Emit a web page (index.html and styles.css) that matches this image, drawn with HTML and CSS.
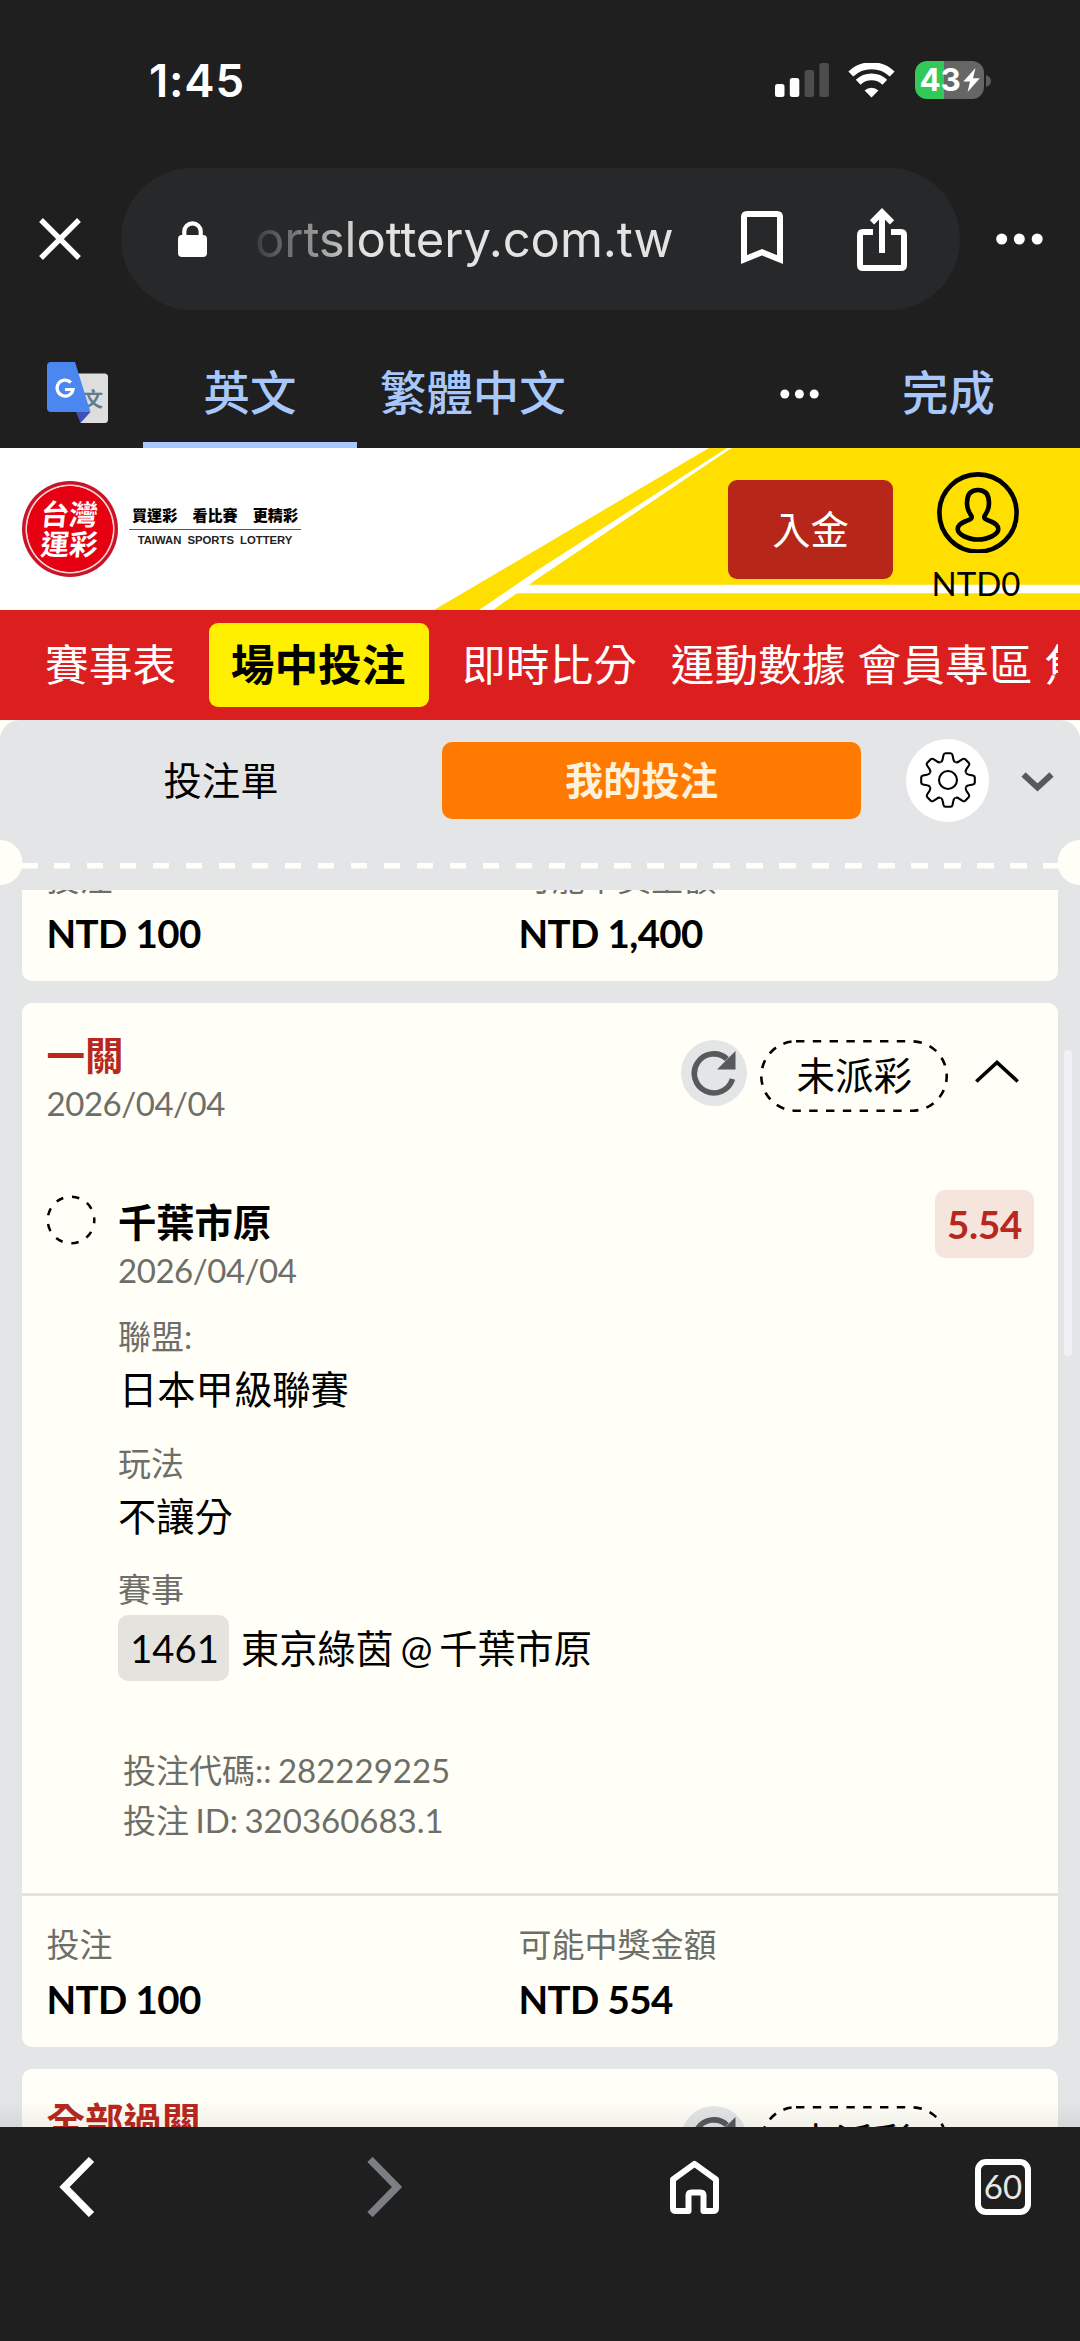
FILE: index.html
```html
<!DOCTYPE html>
<html lang="zh-Hant">
<head>
<meta charset="utf-8">
<title>台灣運彩</title>
<link rel="stylesheet" href="styles.css">
</head>
<body>
<div class="phone">
  <header class="browser">
    <div class="status">
      <span class="clock">1:45</span>
      <svg class="signal" width="54" height="34" viewBox="0 0 54 34">
        <rect x="0" y="21" width="9.5" height="13" rx="2.5" fill="#fff"/>
        <rect x="14.8" y="15" width="9.5" height="19" rx="2.5" fill="#fff"/>
        <rect x="29.6" y="7" width="9.5" height="27" rx="2.5" fill="#4d4d4d"/>
        <rect x="44.4" y="0" width="9.5" height="34" rx="2.5" fill="#4d4d4d"/>
      </svg>
      <svg class="wifi" width="47" height="35" viewBox="0 0 47 35">
        <path d="M2.800 11 A30 30 0 0 1 44.200 11" fill="none" stroke="#fff" stroke-width="7"/>
        <path d="M10.200 19.300 A19 19 0 0 1 36.800 19.300" fill="none" stroke="#fff" stroke-width="6.800"/>
        <path d="M23.5 34.500 L16.600 27.400 A10 10 0 0 1 30.400 27.400 Z" fill="#fff"/>
      </svg>
      <div class="battery">
        <span class="level">43</span>
        <svg width="17" height="24" viewBox="0 0 17 24"><path d="M12.5 0 L0.3 13.4 H7 L4.6 24 L16.8 10.2 H10 Z" fill="#fff"/></svg>
      </div>
      <svg class="nub" width="5" height="12" viewBox="0 0 5 12"><path d="M0 0 Q5 2 5 6 T0 12 Z" fill="#5c5c5c"/></svg>
    </div>
    <div class="address">
      <svg class="close" width="42" height="42" viewBox="0 0 42 42"><path d="M2 2 L40 40 M40 2 L2 40" stroke="#fff" stroke-width="5.4"/></svg>
      <div class="urlbar">
        <svg class="lock" width="29" height="36" viewBox="0 0 29 36">
          <rect x="0" y="14" width="29" height="22" rx="4" fill="#fff"/>
          <path d="M6.3 16 V10.5 A8.2 8.2 0 0 1 22.7 10.5 V16" fill="none" stroke="#fff" stroke-width="4.2"/>
        </svg>
        <span class="url">ortslottery.com.tw</span>
        <svg class="bookmark" width="42" height="54" viewBox="0 0 42 54"><path d="M3 48.6 V6 Q3 3 6 3 H36 Q39 3 39 6 V48.6 L21 41.3 Z" fill="none" stroke="#fff" stroke-width="6"/></svg>
        <svg class="share" width="50" height="64" viewBox="0 0 50 64">
          <path d="M16 24 H6 Q3 24 3 27 V57 Q3 60 6 60 H44 Q47 60 47 57 V27 Q47 24 44 24 H34" fill="none" stroke="#fff" stroke-width="6"/>
          <path d="M25 45 V5 M15 14.3 L25 4.3 L35 14.3" fill="none" stroke="#fff" stroke-width="6"/>
        </svg>
      </div>
      <svg class="more" width="47" height="12" viewBox="0 0 47 12"><g fill="#fff"><circle cx="5.7" cy="6" r="5.5"/><circle cx="23.3" cy="6" r="5.5"/><circle cx="41.2" cy="6" r="5.5"/></g></svg>
    </div>
    <div class="translate">
      <svg class="gt" width="62" height="62" viewBox="0 0 62 62">
        <path d="M31 11.5 H57.5 Q61 11.5 61 15 V57.5 Q61 61 57.5 61 H33.5 Z" fill="#dedede"/>
        <text x="36" y="45" font-size="20" class="gt-wen" fill="#607d8b">文</text>
        <path d="M29 50 H43.5 L33.5 61 Z" fill="#3f51b5"/>
        <path d="M4 0 H28 L43.5 50 H4 Q0 50 0 46 V4 Q0 0 4 0 Z" fill="#4a87f0"/>
        <path d="M23.8 20.5 A8 8 0 1 0 26 27.5 H18" fill="none" stroke="#fff" stroke-width="3.2"/>
      </svg>
      <span class="lang on">英文</span>
      <span class="lang zh">繁體中文</span>
      <svg class="more2" width="39" height="10" viewBox="0 0 39 10"><g fill="#fff"><circle cx="4.8" cy="5" r="4.5"/><circle cx="19.4" cy="5" r="4.5"/><circle cx="34.2" cy="5" r="4.5"/></g></svg>
      <span class="lang done">完成</span>
    </div>
  </header>

  <div class="masthead">
    <svg class="stripes" width="1080" height="162" viewBox="0 0 1080 162">
      <path d="M434 162 L709 0 H1080 V162 Z" fill="#ffdf00"/>
      <path d="M479 162 L540 120.5 L727 0 H731.5 L540 129 L493 162 Z" fill="#fff"/>
      <path d="M525 136.7 H1080 V145.3 H513 Z" fill="#fff"/>
    </svg>
    <div class="seal"><span>台灣</span><span>運彩</span></div>
    <div class="slogan">
      <span class="slogan-zh">買運彩　看比賽　更精彩</span>
      <span class="slogan-en">TAIWAN SPORTS LOTTERY</span>
    </div>
    <button class="deposit">入金</button>
    <div class="account">
      <svg width="82" height="81" viewBox="0 0 82 81">
        <g fill="none" stroke="#000" stroke-width="4.6">
          <circle cx="41" cy="41" r="38.6"/>
          <path stroke-linejoin="round" d="M41 18 C49 18 52 23.500 52 31 C52 38 49.500 41 47.500 44 C46.500 47 49 47.500 53 49 C58 51 61.300 53 61.300 57 C61.300 62 52 67.500 41 67.500 S20.700 62 20.700 57 C20.700 53 24 51 29 49 C33 47.500 35.500 47 34.500 44 C32.500 41 30 38 30 31 C30 23.500 33 18 41 18 Z"/>
        </g>
      </svg>
      <span class="balance">NTD0</span>
    </div>
  </div>

  <nav class="nav">
    <a>賽事表</a>
    <a class="active">場中投注</a>
    <a>即時比分</a>
    <a class="wide">運動數據</a>
    <a class="tight">會員專區</a>
    <a class="tight">焦點</a>
  </nav>

  <main class="sheet">
    <div class="panel">
      <div class="tabs">
        <span class="tab">投注單</span>
        <span class="tab selected">我的投注</span>
        <span class="gear">
          <svg width="58" height="58" viewBox="-29 -29 58 58" fill="none" stroke="#000" stroke-width="2.100">
            <circle r="9"/>
            <path id="tooth" d="M-7.400 -17.900 Q-5.600 -18.700 -5.300 -21 L-4.500 -25 Q-4 -26.800 -2.500 -26.800 H2.500 Q4 -26.800 4.500 -25 L5.300 -21 Q5.600 -18.700 7.400 -17.900"/>
            <use href="#tooth" transform="rotate(45)"/><use href="#tooth" transform="rotate(90)"/><use href="#tooth" transform="rotate(135)"/><use href="#tooth" transform="rotate(180)"/><use href="#tooth" transform="rotate(225)"/><use href="#tooth" transform="rotate(270)"/><use href="#tooth" transform="rotate(315)"/>
          </svg>
        </span>
        <svg class="collapse" width="33" height="20" viewBox="0 0 33 20"><path d="M2.500 2.500 L16.500 15.500 L30.500 2.500" fill="none" stroke="#58595b" stroke-width="6"/></svg>
      </div>
      <div class="perforation"></div>

      <div class="list">
        <section class="card first">
          <div class="totals">
            <div class="total"><span class="label">投注</span><strong>NTD 100</strong></div>
            <div class="total"><span class="label">可能中獎金額</span><strong>NTD 1,400</strong></div>
          </div>
        </section>

        <section class="card">
          <div class="head">
            <div class="title"><b>一關</b><span class="date">2026/04/04</span></div>
            <span class="refresh"><svg width="46" height="46" viewBox="0 0 46 46"><path d="M41.500 29 A19.500 19.500 0 1 1 36 9" fill="none" stroke="#58595b" stroke-width="5.600"/><path d="M44.500 1 V19.500 H26 Z" fill="#58595b"/></svg></span>
            <span class="pending"><svg width="188" height="72" viewBox="0 0 188 72"><rect x="1.300" y="1.300" width="185.400" height="69.400" rx="34.700"/></svg>未派彩</span>
            <svg class="fold" width="44" height="23" viewBox="0 0 44 23"><path d="M1.300 21.500 L22 2.500 L42.700 21.500" fill="none" stroke="#000" stroke-width="3.600"/></svg>
          </div>
          <div class="event">
            <svg class="ring" width="50" height="50" viewBox="0 0 50 50"><circle cx="25" cy="25" r="23.300" fill="none" stroke="#000" stroke-width="2.500" stroke-dasharray="7.400 8.900" stroke-dashoffset="4"/></svg>
            <div class="info">
              <b class="team">千葉市原</b>
              <span class="date">2026/04/04</span>
              <div class="field"><span class="label">聯盟:</span><span class="value indent">日本甲級聯賽</span></div>
              <div class="field"><span class="label">玩法</span><span class="value">不讓分</span></div>
              <div class="field"><span class="label">賽事</span><span class="match"><i class="code">1461</i>東京綠茵 @ 千葉市原</span></div>
              <div class="ids"><span>投注代碼:: 282229225</span><span>投注 ID: 320360683.1</span></div>
            </div>
            <span class="odds">5.54</span>
          </div>
          <div class="totals ruled">
            <div class="total"><span class="label">投注</span><strong>NTD 100</strong></div>
            <div class="total"><span class="label">可能中獎金額</span><strong>NTD 554</strong></div>
          </div>
        </section>

        <section class="card">
          <div class="head">
            <div class="title"><b>全部過關</b></div>
            <span class="refresh"><svg width="46" height="46" viewBox="0 0 46 46"><path d="M41.500 29 A19.500 19.500 0 1 1 36 9" fill="none" stroke="#58595b" stroke-width="5.600"/><path d="M44.500 1 V19.500 H26 Z" fill="#58595b"/></svg></span>
            <span class="pending"><svg width="188" height="72" viewBox="0 0 188 72"><rect x="1.300" y="1.300" width="185.400" height="69.400" rx="34.700"/></svg>未派彩</span>
            <svg class="fold" width="44" height="23"></svg>
          </div>
        </section>
        <div class="scrollbar"></div>
        <div class="fade"></div>
      </div>
    </div>
  </main>

  <footer class="toolbar">
    <svg class="back" width="36" height="60" viewBox="0 0 36 60"><path d="M32.500 2.500 L5.500 30 L32.500 57.500" fill="none" stroke="#fff" stroke-width="7.400"/></svg>
    <svg class="fwd" width="36" height="60" viewBox="0 0 36 60"><path d="M3 2.500 L30 30 L3 57.500" fill="none" stroke="#7b7e82" stroke-width="7.400"/></svg>
    <svg class="home" width="49" height="54" viewBox="0 0 49 54"><path d="M24.500 3.800 L46 19.500 V48 Q46 51 43 51 H33.500 V35.500 Q33.500 32.500 30.500 32.500 H21.500 Q18.500 32.500 18.500 35.500 V51 H6 Q3 51 3 48 V19.500 Z" fill="none" stroke="#fff" stroke-width="6" stroke-linejoin="round"/></svg>
    <span class="count">60</span>
  </footer>
</div>
</body>
</html>
```
FILE: styles.css
```css
* { box-sizing: border-box; }

body {
  margin: 0;
  background: #1f1f1f;
}

svg { display: block; flex: none; }

.phone {
  width: 1080px;
  height: 2341px;
  display: flex;
  flex-direction: column;
  overflow: hidden;
  font-family: Lato, "Noto Sans CJK TC", sans-serif;
  color: #000;
  white-space: nowrap;
}

/* browser chrome */
.browser {
  height: 448px;
  flex: none;
  background: #1f1f1f;
  color: #fff;
}

.status {
  height: 168px;
  padding: 61px 0 0 149px;
  display: flex;
}

.clock {
  width: 625.5px;
  font: 600 45.5px/40px Inter, sans-serif;
  letter-spacing: 0.8px;
}

.signal { margin-top: 2px; }
.wifi { margin: 2px 0 0 19px; }

.battery {
  width: 69px;
  height: 38px;
  margin-left: 20px;
  padding-left: 5px;
  display: flex;
  align-items: center;
  gap: 2px;
  border-radius: 12px;
  background: linear-gradient(90deg, #34c759 29px, #666 29px);
}

.level {
  width: 41px;
  font: 700 31.5px/38px Inter, sans-serif;
  letter-spacing: -0.2px;
}

.nub { margin: 14px 0 0 2px; }

.address {
  height: 142px;
  padding-left: 38.5px;
  display: flex;
  align-items: center;
}

.urlbar {
  width: 839px;
  height: 142px;
  margin-left: 40px;
  padding-left: 57.5px;
  display: flex;
  align-items: center;
  border-radius: 71px;
  background: #27282a;
}

.url {
  width: 486px;
  margin: 2px 0 0 48px;
  font: 400 49px/60px Inter, sans-serif;
  letter-spacing: -0.1px;
  color: #e3e3e3;
  -webkit-mask-image: linear-gradient(90deg, rgba(0,0,0,.1) 0, #000 110px);
  mask-image: linear-gradient(90deg, rgba(0,0,0,.1) 0, #000 110px);
}

.bookmark { margin-top: -2px; }
.share { margin: 1px 0 0 74px; }
.more { margin-left: 36px; }

.translate {
  height: 138px;
  padding-left: 46.5px;
  display: flex;
}

.gt { margin-top: 52px; }
.gt-wen { font-family: "Noto Sans CJK TC", sans-serif; font-weight: 700; }

.lang {
  font: 500 46.4px/60px "Noto Sans CJK TC", sans-serif;
  color: #a8c7fa;
  padding-top: 50px;
}

.lang.on {
  width: 214px;
  margin-left: 34.5px;
  text-align: center;
  border-radius: 5px 5px 0 0;
  background: linear-gradient(#a8c7fa, #a8c7fa) bottom / 100% 6px no-repeat;
}

.lang.zh { margin-left: 23px; width: 399.5px; }
.more2 { margin-top: 78.5px; }
.lang.done { margin-left: 83.5px; }

/* site header */
.masthead {
  position: relative;
  height: 162px;
  flex: none;
  display: flex;
  padding-left: 22px;
  background: #fff;
}

.stripes { position: absolute; inset: 0; }

.seal {
  width: 96px;
  height: 96px;
  margin-top: 33px;
  padding-bottom: 3px;
  display: flex;
  flex-direction: column;
  align-items: center;
  justify-content: center;
  border-radius: 50%;
  background: radial-gradient(circle, #e60012 42.5px, #fbd0d0 43.2px, #fbd0d0 44px, #c81426 45px);
  font: 700 28.5px/29.5px "Noto Sans CJK TC", sans-serif;
  color: #fff;
}

.seal span { transform: skewX(-6deg); }

.slogan {
  width: 172px;
  margin: 56px 0 0 11px;
  display: flex;
  flex-direction: column;
}

.slogan-zh {
  height: 26px;
  padding-left: 3px;
  border-bottom: 1.5px solid #555;
  font: 900 15.1px/20px "Noto Sans CJK TC", sans-serif;
}

.slogan-en {
  font: 700 11.3px/20px "Liberation Sans", sans-serif;
  text-align: center;
  word-spacing: 3px;
  color: #222;
}

.deposit {
  position: relative;
  width: 165px;
  height: 99px;
  margin: 32px 0 0 427px;
  padding: 0;
  border: 0;
  border-radius: 9px;
  background: #b72719;
  color: #fff;
  font: 400 38.3px/95px "Noto Sans CJK TC", sans-serif;
}

.deposit { line-height: 95px; padding-bottom: 4px; }

.account {
  position: relative;
  width: 90px;
  margin: 24px 0 0 39.5px;
  display: flex;
  flex-direction: column;
  align-items: center;
}

.balance { margin: 10px 3px 0 0; font-size: 33px; line-height: 40px; }

/* navigation */
.nav {
  height: 110px;
  flex: none;
  padding: 13px 22px 13px 0;
  display: flex;
  overflow: clip;
  overflow-clip-margin: content-box;
  background: #db1f1f;
  color: #fff;
  font: 400 43.7px/79px "Noto Sans CJK TC", sans-serif;
}

.nav a { flex: none; margin-right: 33px; }
.nav a:first-child { margin-left: 45px; }
.nav a.wide { margin: 0 12px 0 1px; }
.nav a.tight { margin-right: 12px; }

.nav .active {
  width: 220px;
  height: 84px;
  padding-right: 2px;
  border-radius: 9px;
  background: #fff000;
  color: #000;
  font-weight: 700;
  text-align: center;
}

/* bet panel */
.sheet {
  height: 1407px;
  flex: none;
  background: #fffff7;
}

.panel {
  height: 1407px;
  border-radius: 20px 20px 0 0;
  background: #e4e5e7;
}

.tabs {
  height: 120px;
  display: flex;
  align-items: center;
}

.tab {
  width: 442px;
  height: 77px;
  font: 400 38.3px/73px "Noto Sans CJK TC", sans-serif;
  text-align: center;
}

.tab.selected {
  width: 419px;
  border-radius: 10px;
  background: #ff7a00;
  color: #fff2dc;
  font-weight: 700;
  padding-right: 20px;
}

.gear {
  width: 83px;
  height: 83px;
  margin-left: 45px;
  display: grid;
  place-items: center;
  border-radius: 50%;
  background: #fff;
}

.collapse { margin: 3px 0 0 32px; }

.perforation {
  height: 50px;
  background:
    radial-gradient(circle at 0 22.5px, #fffff7 22px, transparent 22.8px),
    radial-gradient(circle at 1080px 22.5px, #fffff7 22px, transparent 22.8px),
    repeating-linear-gradient(90deg, #fffff7 0 16.5px, transparent 16.5px 32.97px) 20.7px 22.7px / 1040px 5.5px no-repeat;
}

.list {
  position: relative;
  height: 1237px;
  padding: 0 22px;
  display: flex;
  flex-direction: column;
  gap: 22px;
  overflow: hidden;
}

.card {
  flex: none;
  border-radius: 10px;
  background: #fffff7;
}

.card.first { margin-top: -61px; }

.totals {
  height: 151.5px;
  padding: 25.5px 24px 0 24.5px;
  display: grid;
  grid-template-columns: 472px 1fr;
}

.totals.ruled { height: 154px; border-top: 3px solid #e5e3dd; }

.total, .title, .info, .field, .ids { display: flex; flex-direction: column; }

.label { font-size: 33px; line-height: 46px; color: #6e6e69; }

.total strong {
  margin-top: 2px;
  font-size: 38.5px;
  line-height: 60px;
  font-weight: 700;
  letter-spacing: -0.6px;
}

.head {
  height: 167px;
  padding: 29px 39px 0 24.5px;
  display: flex;
}

.title { width: 636px; }
.title b { font-size: 38.5px; line-height: 46px; padding-bottom: 2px; color: #b9281f; }
.date { font-size: 33px; line-height: 46px; letter-spacing: -0.45px; color: #6e6e69; }

.refresh {
  width: 66px;
  height: 66px;
  margin-top: 8.5px;
  display: grid;
  place-items: center;
  border-radius: 50%;
  background: #e4e5e7;
}

.pending {
  position: relative;
  width: 188px;
  height: 72px;
  margin: 8.5px 0 0 13px;
  font-size: 38.5px;
  line-height: 71px;
  text-align: center;
}

.pending svg {
  position: absolute;
  inset: 0;
  fill: none;
  stroke: #000;
  stroke-width: 2.6;
  stroke-dasharray: 8.4 8.4;
}

.fold { margin: 28.5px 0 0 27px; }

.event {
  height: 723px;
  padding: 20px 24px 0;
  display: flex;
}

.ring { margin-top: 5px; }
.info { flex: 1; margin-left: 22px; padding-top: 8px; }
.team { font-size: 38.3px; line-height: 49px; }

.field { margin-top: 20.5px; }
.value { font-size: 38.3px; line-height: 60px; }
.value.indent { padding-left: 1px; }

.match {
  margin-top: 3px;
  display: flex;
  align-items: center;
  gap: 12px;
  font-size: 38.2px;
  line-height: 66px;
  word-spacing: -3px;
}

.code {
  width: 111px;
  height: 66px;
  padding-left: 2px;
  border-radius: 10px;
  background: #e5e3dd;
  font-style: normal;
  text-align: center;
}

.ids {
  margin-top: 65px;
  padding-left: 5px;
  font-size: 33px;
  line-height: 49.5px;
  word-spacing: -2px;
  color: #6e6e69;
}

.odds {
  width: 99px;
  height: 68px;
  border-radius: 10px;
  background: #f6e5dd;
  color: #b9281f;
  font-size: 38.5px;
  font-weight: 700;
  line-height: 68px;
  letter-spacing: -0.3px;
  text-align: center;
}

.scrollbar {
  position: absolute;
  right: 8px;
  top: 160px;
  width: 8px;
  height: 306px;
  border-radius: 4px;
  background: #f1f1f5;
}

.fade {
  position: absolute;
  inset: auto 0 0 0;
  height: 26px;
  background: linear-gradient(rgba(0,0,0,0), rgba(0,0,0,.06));
}

/* browser toolbar */
.toolbar {
  height: 214px;
  padding: 30px 0 0 58.5px;
  display: flex;
  align-items: flex-start;
  background: #1f1f1f;
}

.fwd { margin-left: 272.5px; }
.home { margin: 3px 0 0 266.5px; }

.count {
  width: 56px;
  height: 56px;
  margin: 2px 0 0 256.5px;
  border: 6px solid #fff;
  border-radius: 11px;
  color: #e8e8e8;
  font-size: 33px;
  line-height: 43px;
  text-align: center;
}
```
